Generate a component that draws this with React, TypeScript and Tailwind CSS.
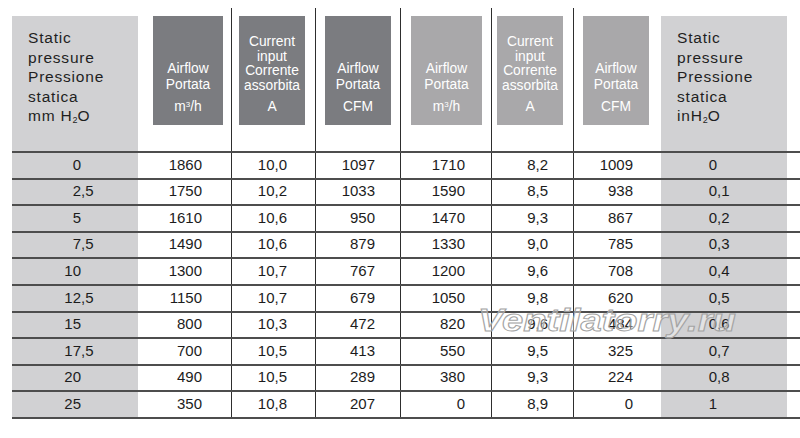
const rows: [string, string, string, string, string, string, string, string][] = [
  ["0", "1860", "10,0", "1097", "1710", "8,2", "1009", "0"],
  ["2,5", "1750", "10,2", "1033", "1590", "8,5", "938", "0,1"],
  ["5", "1610", "10,6", "950", "1470", "9,3", "867", "0,2"],
  ["7,5", "1490", "10,6", "879", "1330", "9,0", "785", "0,3"],
  ["10", "1300", "10,7", "767", "1200", "9,6", "708", "0,4"],
  ["12,5", "1150", "10,7", "679", "1050", "9,8", "620", "0,5"],
  ["15", "800", "10,3", "472", "820", "9,6", "484", "0,6"],
  ["17,5", "700", "10,5", "413", "550", "9,5", "325", "0,7"],
  ["20", "490", "10,5", "289", "380", "9,3", "224", "0,8"],
  ["25", "350", "10,8", "207", "0", "8,9", "0", "1"],
];

const grid =
  "grid grid-cols-[126px_93px_84px_85px_91px_82px_88px_126px] border-b-2 border-[#4d4d4d]";

// splits "12,5" into "12" and ",5" so the comma lines up
function Decimal({ value, intWidth }: { value: string; intWidth: string }) {
  const [int, dec] = value.split(",");
  return (
    <div className="flex h-full items-center pb-[1px]">
      <span className={`${intWidth} text-right`}>{int}</span>
      <span>{dec !== undefined ? `,${dec}` : ""}</span>
    </div>
  );
}

function PressureHead({ unit }: { unit: "mm" | "in" }) {
  return (
    <div className="mt-[8px] h-[135px] bg-[#d1d1d3] pl-[16px] pt-[12px] text-[15.5px] leading-[19.5px] tracking-[0.8px] text-[#1f1f1f]">
      <div>Static</div>
      <div>pressure</div>
      <div>Pressione</div>
      <div>statica</div>
      <div>
        {unit === "mm" ? "mm H" : "inH"}
        <sub className="text-[9px] tracking-normal">2</sub>O
      </div>
    </div>
  );
}

function HeadBox({
  lines,
  unit,
  tone,
  offset,
  width,
  tight,
}: {
  lines: string[];
  unit: React.ReactNode;
  tone: string;
  offset: string;
  width: string;
  tight?: boolean;
}) {
  return (
    <div
      className={`mt-[8px] flex h-[109px] flex-col items-center justify-end pb-[10px] text-center text-[13.8px] text-white ${tone} ${offset} ${width}`}
    >
      {lines.map((l) => (
        <div key={l} className={tight ? "leading-[14.5px]" : "leading-[16px]"}>
          {l}
        </div>
      ))}
      <div className="mt-[6px] leading-[16px]">{unit}</div>
    </div>
  );
}

const m3h = (
  <>
    m<sup className="text-[8px]">3</sup>/h
  </>
);

export default function App() {
  const dark = "bg-[#7b7c80]";
  const light = "bg-[#a9a8aa]";
  const vline = "border-l border-[#2e2e2e]";

  return (
    <div className="relative h-[438px] w-[800px] bg-white pl-[12px] pt-[8px] font-['Liberation_Sans',Arial,sans-serif] text-[#1c1c1c]">
      {/* header */}
      <div className={`${grid} h-[145px]`}>
        <PressureHead unit="mm" />
        <div>
          <HeadBox lines={["Airflow", "Portata"]} unit={m3h} tone={dark} offset="ml-[15px]" width="w-[70px]" />
        </div>
        <div className={vline}>
          <HeadBox
            lines={["Current", "input", "Corrente", "assorbita"]}
            unit="A"
            tone={dark}
            offset="ml-[7px]"
            width="w-[66px]"
            tight
          />
        </div>
        <div className={vline}>
          <HeadBox lines={["Airflow", "Portata"]} unit="CFM" tone={dark} offset="ml-[9px]" width="w-[66px]" />
        </div>
        <div className={vline}>
          <HeadBox lines={["Airflow", "Portata"]} unit={m3h} tone={light} offset="ml-[10px]" width="w-[71px]" />
        </div>
        <div className={vline}>
          <HeadBox
            lines={["Current", "input", "Corrente", "assorbita"]}
            unit="A"
            tone={light}
            offset="ml-[5px]"
            width="w-[66px]"
            tight
          />
        </div>
        <div className={vline}>
          <HeadBox lines={["Airflow", "Portata"]} unit="CFM" tone={light} offset="ml-[9px]" width="w-[66px]" />
        </div>
        <PressureHead unit="in" />
      </div>

      {/* data rows */}
      {rows.map((r) => (
        <div key={r[0]} className={`${grid} h-[26.6px] text-[15px]`}>
          <div className="bg-[#d1d1d3]">
            <Decimal value={r[0]} intWidth="w-[69px]" />
          </div>
          <div className="flex items-center justify-end pb-[1px] pr-[29px]">{r[1]}</div>
          <div className={`${vline} flex items-center justify-end pb-[1px] pr-[28px]`}>{r[2]}</div>
          <div className={`${vline} flex items-center justify-end pb-[1px] pr-[25px]`}>{r[3]}</div>
          <div className={`${vline} flex items-center justify-end pb-[1px] pr-[26px]`}>{r[4]}</div>
          <div className={`${vline} flex items-center justify-end pb-[1px] pr-[25px]`}>{r[5]}</div>
          <div className={`${vline} flex items-center justify-end pb-[1px] pr-[28px]`}>{r[6]}</div>
          <div className="bg-[#d1d1d3]">
            <Decimal value={r[7]} intWidth="w-[56px]" />
          </div>
        </div>
      ))}

      {/* watermark */}
      <div className="pointer-events-none absolute left-[478px] top-[305px] origin-left scale-x-[1.23] text-[31px] font-bold italic leading-none text-white/40 [-webkit-text-stroke:1px_#a4a4a4]">
        Ventilatorry.ru
      </div>
    </div>
  );
}
